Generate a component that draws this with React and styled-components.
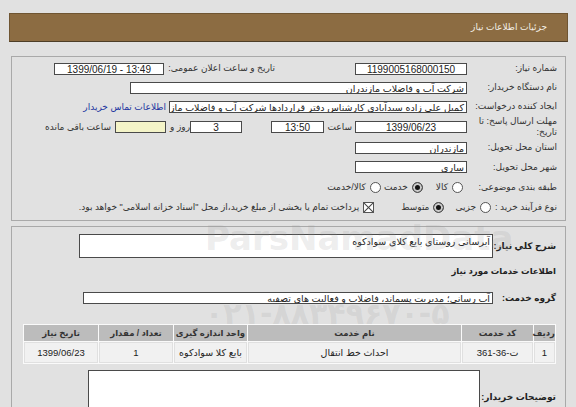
import React from 'react'
import styled, { createGlobalStyle } from 'styled-components'

const GlobalStyle = createGlobalStyle`
  html, body {
    margin: 0;
    padding: 0;
    background: #e1e1e1;
    overflow: hidden;
  }
  body {
    font-family: "Liberation Sans", "DejaVu Sans", sans-serif;
    color: #333;
  }
`

const Page = styled.div`
  position: relative;
  direction: rtl;
  padding: 13px 8px 0 9px;
  height: 407px;
  box-sizing: border-box;
`
const HeaderBar = styled.div`
  height: 27px;
  line-height: 27px;
  background: #8c6c42;
  border: 1px solid #6f5532;
  border-bottom-color: #4d3d27;
  padding-right: 20px;
  color: #f3efe6;
  font-size: 9px;
`
const Panel = styled.div`
  margin: ${(p) => p.top}px 2px 0 2px;
  border: 1px solid #a9a9a9;
  padding: ${(p) => p.pad};
  box-sizing: border-box;
  height: ${(p) => (p.h ? `${p.h}px` : 'auto')};
`
const Row = styled.div`
  display: flex;
  align-items: center;
  height: ${(p) => p.h || 19}px;
  margin-top: ${(p) => p.mt || 0}px;
`
const Label = styled.div`
  width: ${(p) => p.w || 90}px;
  flex: none;
  text-align: right;
  font-size: 9px;
  line-height: 11px;
  color: #333;
  white-space: nowrap;
`
const SideLabel = styled(Label)`
  margin: 0 ${(p) => p.mr || 0}px 0 ${(p) => p.ml || 0}px;
`
const Input = styled.div`
  flex: none;
  width: ${(p) => p.w}px;
  height: 12px;
  line-height: 12px;
  border: 1px solid #4a4a4a;
  background: ${(p) => p.bg || '#fff'};
  margin-right: ${(p) => p.mr || 0}px;
  font-size: 10px;
  color: #222;
  text-align: center;
  direction: ltr;
  padding: 0 2px;
  box-sizing: border-box;
  overflow: hidden;
  white-space: nowrap;
`
const TextInput = styled(Input)`
  direction: rtl;
  text-align: right;
  font-size: 9.5px;
`
const Link = styled.a`
  margin-right: 3px;
  color: #2135a0;
  font-size: 9px;
  text-decoration: none;
  white-space: nowrap;
`
const Option = styled.label`
  display: flex;
  align-items: center;
  margin-left: ${(p) => p.gap || 12}px;
  font-size: 9px;
  color: #333;
  white-space: nowrap;
`
const Radio = styled.span`
  width: 9px;
  height: 9px;
  border-radius: 50%;
  border: 1px solid #555;
  background: ${(p) => (p.on ? '#111' : '#fff')};
  box-shadow: ${(p) => (p.on ? 'inset 0 0 0 2px #ccc' : 'none')};
  margin-left: 4px;
  flex: none;
`
const Check = styled.span`
  position: relative;
  width: 9px;
  height: 9px;
  border: 1px solid #555;
  background: #fff;
  margin-left: 4px;
  flex: none;
  overflow: hidden;
  &::before,
  &::after {
    content: '';
    position: absolute;
    left: -2px;
    top: 4px;
    width: 13px;
    height: 1px;
    background: #444;
    transform: rotate(45deg);
  }
  &::after {
    transform: rotate(-45deg);
  }
`
const BoldLabel = styled.div`
  width: ${(p) => p.w}px;
  flex: none;
  text-align: right;
  font-size: 9px;
  font-weight: bold;
  color: #222;
  white-space: nowrap;
  margin-top: ${(p) => p.mt || 0}px;
`
const Title = styled.div`
  margin-top: ${(p) => p.mt}px;
  font-size: 8.5px;
  font-weight: bold;
  color: #222;
  line-height: 12px;
`
const Box = styled.div`
  width: ${(p) => p.w}px;
  height: ${(p) => p.h}px;
  border: 1px solid #4a4a4a;
  background: #fff;
  box-sizing: border-box;
  font-size: 9.5px;
  line-height: ${(p) => p.lh || 11}px;
  padding: 1px 2px;
  color: #222;
  overflow: hidden;
  white-space: nowrap;
`
const Table = styled.table`
  margin: 20px 0 0 0;
  width: 532px;
  border-collapse: separate;
  border-spacing: 1px;
  background: #fafafa;
  font-size: 9px;
  table-layout: fixed;
`
const Th = styled.th`
  background: #bcbcbc;
  color: #333;
  height: 16px;
  padding: 0;
  font-weight: bold;
  font-size: 8.5px;
  width: ${(p) => p.w}px;
`
const Td = styled.td`
  background: #f1f1f1;
  color: #222;
  height: 19px;
  padding: 0;
  text-align: center;
  font-size: 9.5px;
  border: 1px solid #e0e0e0;
`
const BottomRow = styled.div`
  display: flex;
  align-items: flex-start;
  margin-top: 6px;
`
const Watermark = styled.div`
  position: absolute;
  left: ${(p) => p.x}px;
  top: ${(p) => p.y}px;
  font-family: "DejaVu Sans", sans-serif;
  font-size: ${(p) => p.size}px;
  font-weight: bold;
  color: rgba(150, 150, 150, 0.18);
  pointer-events: none;
  direction: ltr;
  white-space: nowrap;
`

const App = () => (
  <>
    <GlobalStyle />
    <Page>
      <HeaderBar>جزئیات اطلاعات نیاز</HeaderBar>

      <Panel top={14} h={165} pad="2px 8px 0 0">
        <Row>
          <Label>شماره نیاز:</Label>
          <Input w={112}>1199005168000150</Input>
          <SideLabel w={111} mr={80}>تاریخ و ساعت اعلان عمومی:</SideLabel>
          <Input w={110}>1399/06/19 - 13:49</Input>
        </Row>
        <Row>
          <Label>نام دستگاه خریدار:</Label>
          <TextInput w={337}>شرکت آب و فاضلاب مازندران</TextInput>
        </Row>
        <Row>
          <Label>ایجاد کننده درخواست:</Label>
          <TextInput w={298}>
            کمیل علی زاده سیدآبادی کارشناس دفتر قراردادها شرکت آب و فاضلاب مازندران
          </TextInput>
          <Link href="#">اطلاعات تماس خریدار</Link>
        </Row>
        <Row h={22}>
          <Label>
            مهلت ارسال پاسخ: تا
            <br />
            تاریخ:
          </Label>
          <Input w={112}>1399/06/23</Input>
          <SideLabel w={26} mr={3}>ساعت</SideLabel>
          <Input w={53} mr={2}>13:50</Input>
          <Input w={52} mr={29}>3</Input>
          <SideLabel w={20}>روز و</SideLabel>
          <Input w={51} mr={4} bg="#f4f4c8" />
          <SideLabel w={70} mr={4}>ساعت باقی مانده</SideLabel>
        </Row>
        <Row>
          <Label>استان محل تحویل:</Label>
          <TextInput w={112}>مازندران</TextInput>
        </Row>
        <Row h={20}>
          <Label>شهر محل تحویل:</Label>
          <TextInput w={112}>ساری</TextInput>
        </Row>
        <Row h={20}>
          <Label w={94}>طبقه بندی موضوعی:</Label>
          <Option gap={13}><Radio />کالا</Option>
          <Option gap={3}><Radio on />خدمت</Option>
          <Option><Radio />کالا/خدمت</Option>
        </Row>
        <Row h={20}>
          <Label w={66}>نوع فرآیند خرید :</Label>
          <Option gap={11}><Radio />جزیی</Option>
          <Option gap={27}><Radio on />متوسط</Option>
          <Option><Check />پرداخت تمام یا بخشی از مبلغ خرید،از محل "اسناد خزانه اسلامی" خواهد بود.</Option>
        </Row>
      </Panel>

      <Panel top={5} pad="7px 9px 0 10px" h={190}>
        <Row h={24}>
          <BoldLabel w={63}>شرح کلي نياز:</BoldLabel>
          <Box w={414} h={24}>آبرسانی روستای بایع کلای سوادکوه</Box>
        </Row>
        <Title mt={7}>اطلاعات خدمات مورد نیاز</Title>
        <Row h={13} mt={14}>
          <BoldLabel w={63}>گروه خدمت:</BoldLabel>
          <Box w={410} h={12} lh={9}>
            آب رسانی؛ مدیریت پسماند، فاضلاب و فعالیت های تصفیه
          </Box>
        </Row>
        <Table>
          <thead>
            <tr>
              <Th w={21}>ردیف</Th>
              <Th w={71}>کد خدمت</Th>
              <Th w={213}>نام خدمت</Th>
              <Th w={73}>واحد اندازه گیری</Th>
              <Th w={74}>تعداد / مقدار</Th>
              <Th w={74}>تاریخ نیاز</Th>
            </tr>
          </thead>
          <tbody>
            <tr>
              <Td>1</Td>
              <Td>ت-36-361</Td>
              <Td>احداث خط انتقال</Td>
              <Td>بایع کلا سوادکوه</Td>
              <Td>1</Td>
              <Td>1399/06/23</Td>
            </tr>
          </tbody>
        </Table>
        <BottomRow>
          <BoldLabel w={76} mt={22}>توضیحات خریدار:</BoldLabel>
          <Box w={392} h={60} />
        </BottomRow>
      </Panel>

      <Watermark x={205} y={218} size={34}>ParsNamadData</Watermark>
      <Watermark x={205} y={296} size={30}>۰۲۱-۸۸۳۴۹۶۷۰-۵</Watermark>
    </Page>
  </>
)

export default App
